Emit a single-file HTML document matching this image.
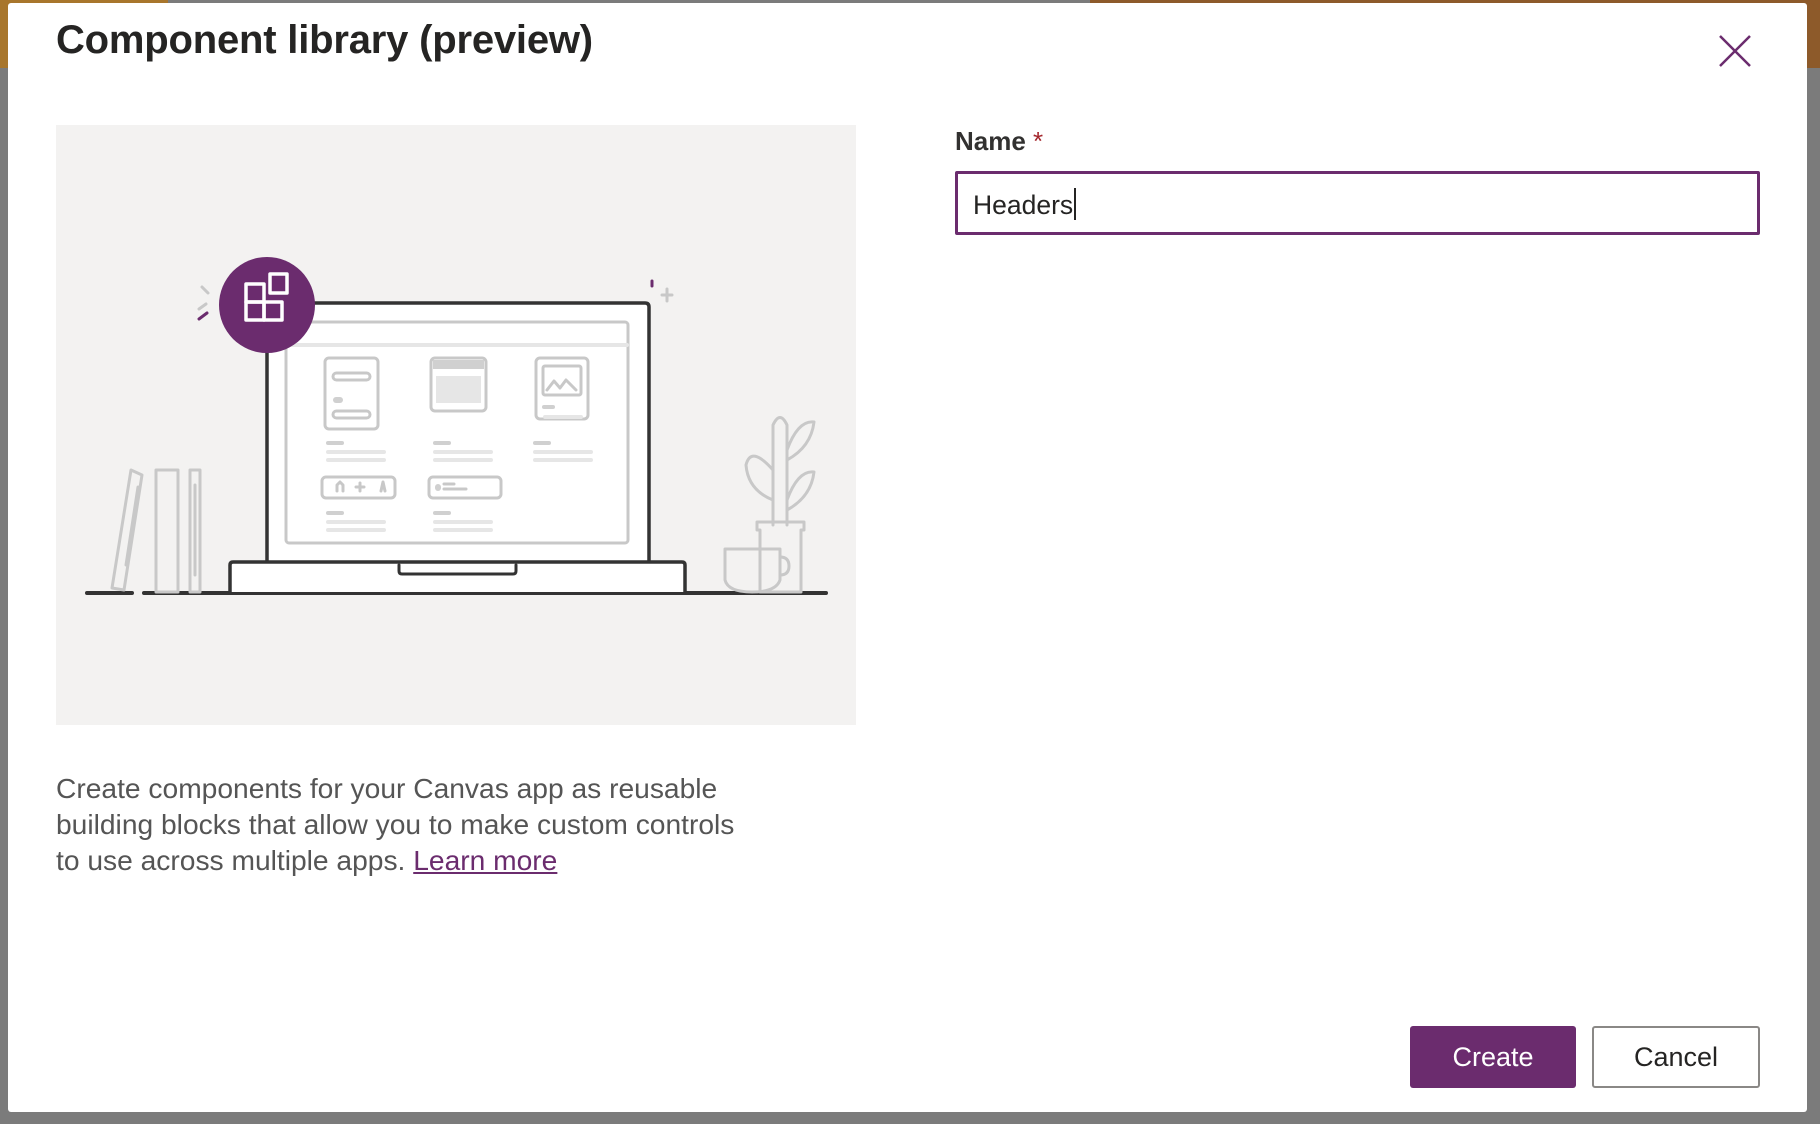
<!DOCTYPE html>
<html><head><meta charset="utf-8"><style>
html,body{margin:0;padding:0;width:1820px;height:1124px;overflow:hidden;background:#7b7b7b;font-family:"Liberation Sans",sans-serif}
.top1{position:absolute;left:0;top:0;width:168px;height:68px;background:#a8762c}
.top2{position:absolute;left:1090px;top:0;width:730px;height:68px;background:#8d5a2a}
.modal{position:absolute;left:8px;top:3px;width:1799px;height:1109px;background:#fff;border-radius:3px}
.title{position:absolute;left:48px;top:15px;font-size:40px;font-weight:bold;color:#252423;letter-spacing:-0.2px}
.close{position:absolute;left:1707px;top:28px}
.ill{position:absolute;left:48px;top:122px;width:800px;height:600px;background:#f3f2f1}
.name{position:absolute;left:947px;top:123px;font-size:26px;font-weight:bold;color:#323130}
.name span{color:#a4262c;font-weight:normal}
.input{position:absolute;left:947px;top:168px;width:799px;height:58px;border:3px solid #6b2c6e;border-radius:2px;box-sizing:content-box}
.input div{position:absolute;left:15px;top:14px;font-size:26.5px;color:#252423}
.input div::after{content:"";display:inline-block;width:2px;height:32px;background:#252423;vertical-align:-6px;margin-left:1px}
.desc{position:absolute;left:48px;top:767px;font-size:28.2px;line-height:36px;color:#555;width:700px}
.desc a{color:#6b2c6e;text-decoration:underline}
.btn{position:absolute;top:1023px;height:62px;border-radius:3px;font-size:27px;text-align:center;line-height:62px;box-sizing:border-box}
.create{left:1402px;width:166px;background:#6b2c6e;color:#fff}
.cancel{left:1584px;width:168px;border:2px solid #8a8886;color:#252423;line-height:58px}
</style></head><body>
<div class="top1"></div><div class="top2"></div>
<div class="modal">
<div class="title">Component library (preview)</div>
<svg class="close" width="40" height="40" viewBox="0 0 40 40"><path d="M5 5L35 35M35 5L5 35" stroke="#6b2c6e" stroke-width="2.5"/></svg>
<div class="ill">
<svg width="800" height="600" viewBox="0 0 800 600" fill="none" stroke-linecap="round" stroke-linejoin="round">
<path d="M31 468H76M88 468H770" stroke="#333" stroke-width="4"/>
<g stroke="#c8c8c8" stroke-width="3">
<path d="M56 463L75 345L86 350L68 465Z"/>
<path d="M100 345H122V467H100Z"/>
<path d="M134 345H144V467H134Z"/><path d="M139 360V450"/>
<path d="M70 440L82 362"/>
</g>
<g stroke="#c8c8c8" stroke-width="3">
<path d="M717 400V300Q724 285 731 300V400"/>
<path d="M701 397H748V405H745V467H704V405H701Z"/>
<path d="M717 345Q695 320 690 340Q692 365 717 375"/>
<path d="M731 325Q742 295 758 297Q755 322 731 335"/>
<path d="M731 375Q742 345 758 347Q755 372 731 385"/>
<path d="M669 424H724V455Q720 467 696 467Q672 467 669 455Z"/>
<path d="M724 432Q733 432 733 441Q733 450 724 450"/>
</g>
<path d="M211 437V182Q211 178 215 178H589Q593 178 593 182V437" stroke="#333" stroke-width="3.5" fill="#fff"/>
<rect x="230" y="197" width="342" height="221" rx="3" stroke="#c8c8c8" stroke-width="3" fill="#fff"/>
<path d="M231 220H571" stroke="#e6e6e6" stroke-width="4"/>
<path d="M174 467V440Q174 437 177 437H626Q629 437 629 440V467" stroke="#333" stroke-width="3.5" fill="#fff"/>
<path d="M343 440V446Q343 449 346 449H457Q460 449 460 446V440" stroke="#333" stroke-width="3"/>
<g stroke="#c8c8c8" stroke-width="3">
<rect x="269" y="233" width="53" height="71" rx="4"/>
<rect x="277" y="248" width="37" height="7" rx="3.5"/>
<rect x="277" y="286" width="37" height="7" rx="3.5"/>
<rect x="375" y="233" width="55" height="53" rx="4"/>
<rect x="480" y="233" width="52" height="61" rx="4"/>
<rect x="487" y="241" width="38" height="29" rx="2"/>
<path d="M491 265L498 256L504 263L510 255L520 265"/>
<rect x="266" y="352" width="73" height="21" rx="4"/>
<rect x="373" y="352" width="72" height="21" rx="4"/>
</g>
<g fill="#d0d0d0">
<rect x="377" y="235" width="51" height="9"/>
<rect x="277" y="272" width="10" height="6" rx="3"/>
<rect x="380" y="251" width="45" height="27" fill="#e6e6e6"/>
<rect x="486" y="280" width="13" height="4" rx="2"/>
<rect x="379" y="359" width="6" height="7" rx="3"/>
<rect x="270" y="316" width="18" height="4" rx="2"/><rect x="377" y="316" width="18" height="4" rx="2"/><rect x="477" y="316" width="18" height="4" rx="2"/>
<rect x="270" y="386" width="18" height="4" rx="2"/><rect x="377" y="386" width="18" height="4" rx="2"/>
</g>
<g fill="#e6e6e6">
<rect x="270" y="325" width="60" height="4" rx="2"/><rect x="270" y="333" width="60" height="4" rx="2"/>
<rect x="377" y="325" width="60" height="4" rx="2"/><rect x="377" y="333" width="60" height="4" rx="2"/>
<rect x="477" y="325" width="60" height="4" rx="2"/><rect x="477" y="333" width="60" height="4" rx="2"/>
<rect x="270" y="395" width="60" height="4" rx="2"/><rect x="270" y="403" width="60" height="4" rx="2"/>
<rect x="377" y="395" width="60" height="4" rx="2"/><rect x="377" y="403" width="60" height="4" rx="2"/>
<rect x="487" y="290" width="40" height="4" rx="2"/>
</g>
<g stroke="#c8c8c8" stroke-width="3"><path d="M281 366V360L284 357L287 360V366M300 362H308M304 358V366M325 366L327 357L329 366"/><path d="M388 359H398M388 364H410"/></g>
<path d="M146 162L152 168M143 184L150 179" stroke="#c8c8c8" stroke-width="3"/>
<path d="M143 194L151 188" stroke="#6b2c6e" stroke-width="3"/>
<path d="M596 156V161" stroke="#6b2c6e" stroke-width="3"/>
<path d="M611 164V176M606 170H616" stroke="#c8c8c8" stroke-width="3"/>
<circle cx="211" cy="180" r="48" fill="#6b2c6e"/>
<g stroke="#fff" stroke-width="3.5" fill="none">
<rect x="190" y="177" width="18" height="18"/><rect x="208" y="177" width="18" height="18"/><rect x="190" y="159" width="18" height="18"/>
<rect x="214" y="149" width="17" height="19"/>
</g>
</svg>
</div>
<div class="name">Name <span>*</span></div>
<div class="input"><div>Headers</div></div>
<div class="desc">Create components for your Canvas app as reusable building blocks that allow you to make custom controls to use across multiple apps. <a>Learn more</a></div>
<div class="btn create">Create</div>
<div class="btn cancel">Cancel</div>
</div>
</body></html>
